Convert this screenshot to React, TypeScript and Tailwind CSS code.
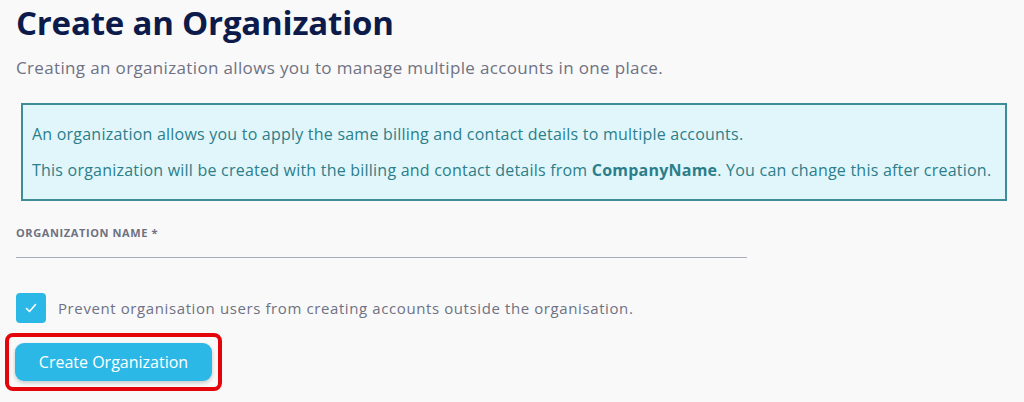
import React, { useState } from 'react';

const CreateOrganization: React.FC = () => {
  const [name, setName] = useState('');
  const [restrict, setRestrict] = useState(true);

  return (
    <div className="min-h-screen bg-[#f9f9fa] pl-4 pr-4 font-['Open_Sans',sans-serif]">
      <h1 className="pt-[1px] text-[33px] font-bold leading-[44px] tracking-[-0.2px] text-[#0d1b4b]">
        Create an Organization
      </h1>
      <p className="mt-[11px] text-[17px] leading-[24px] tracking-[0.35px] text-[#6f7282]">
        Creating an organization allows you to manage multiple accounts in one place.
      </p>

      <div className="ml-[5px] mt-[23px] w-[986px] whitespace-nowrap border-2 border-[#3d8c96] bg-[#e1f6fb] px-[9px] pb-[19px] pt-[19px] text-[16px] leading-[20px] tracking-[0.22px] text-[#2c7e8a]">
        <p>An organization allows you to apply the same billing and contact details to multiple accounts.</p>
        <p className="mt-[16px]">
          This organization will be created with the billing and contact details from{' '}
          <span className="font-bold">CompanyName</span>. You can change this after creation.
        </p>
      </div>

      <label className="mt-[25px] block w-[731px]">
        <span className="block text-[11px] font-bold uppercase leading-[14px] tracking-[0.6px] text-[#6e7180]">
          Organization Name *
        </span>
        <input
          type="text"
          value={name}
          onChange={(e) => setName(e.target.value)}
          className="mt-[4px] block h-[14px] w-full border-b border-[#a9adbb] bg-transparent outline-none"
        />
      </label>

      <label className="mt-[35px] flex cursor-pointer items-center gap-[12px]">
        <button
          type="button"
          onClick={() => setRestrict(!restrict)}
          className={`flex h-[30px] w-[30px] items-center justify-center rounded-[4px] ${restrict ? 'bg-[#2cb8e7]' : 'border border-gray-400 bg-white'}`}
        >
          {restrict && (
            <svg width="14" height="14" viewBox="0 0 14 14" fill="none">
              <path d="M2.5 7.5 L5.5 10.5 L11.5 3.5" stroke="white" strokeWidth="1.6" strokeLinecap="round" strokeLinejoin="round" />
            </svg>
          )}
        </button>
        <span className="text-[15px] tracking-[0.6px] text-[#6f7282]">
          Prevent organisation users from creating accounts outside the organisation.
        </span>
      </label>

      <div className="ml-[-11px] mt-[10px] inline-block rounded-[8px] border-4 border-[#e4050b] p-[6px]">
        <button
          type="button"
          className="block h-[38px] w-[197px] rounded-[9px] bg-[#2cb8e7] text-[16px] tracking-[0px] text-white shadow-[0_2px_4px_rgba(0,0,0,0.2)]"
        >
          Create Organization
        </button>
      </div>
    </div>
  );
};

export default function App() {
  return <CreateOrganization />;
}
